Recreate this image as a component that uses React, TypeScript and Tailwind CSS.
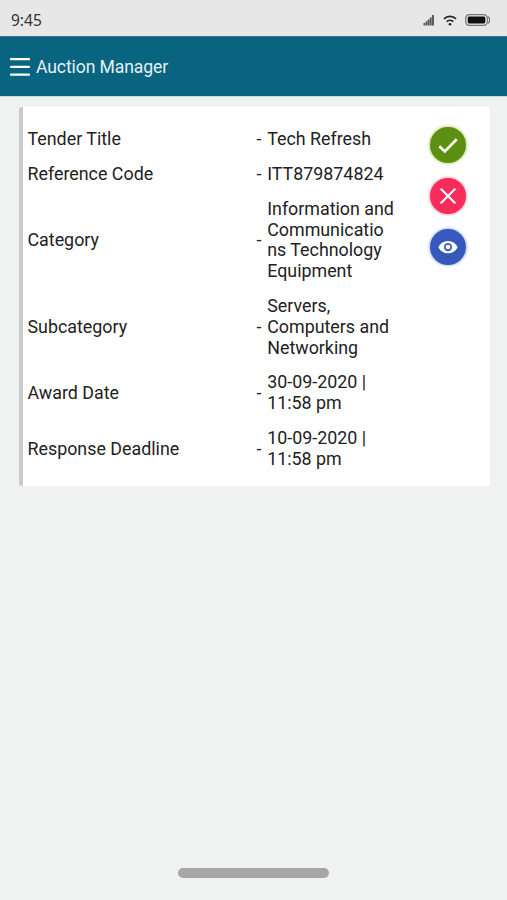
import type { ReactNode } from 'react';

interface TenderField {
    label: string;
    value: string;
}

const fields: TenderField[] = [
    { label: 'Tender Title', value: 'Tech Refresh' },
    { label: 'Reference Code', value: 'ITT879874824' },
    { label: 'Category', value: 'Information and\nCommunicatio\nns Technology\nEquipment' },
    { label: 'Subcategory', value: 'Servers,\nComputers and\nNetworking' },
    { label: 'Award Date', value: '30-09-2020 |\n11:58 pm' },
    { label: 'Response Deadline', value: '10-09-2020 |\n11:58 pm' },
];

function StatusBar() {
    return (
        <div className="flex h-9 items-center justify-between bg-[#e7e7e7] pt-1 pr-4 pl-[11px]">
            <span className="font-['Noto_Sans',sans-serif] text-[15.5px] leading-5 text-[#333]">9:45</span>
            <div className="flex items-center">
                {/* Signal */}
                <svg className="mr-[9px] h-[11px] w-[11px]" viewBox="0 0 11 11" fill="#5c5c5c">
                    <path d="M.5 8h1.8v2.5H.5zM2.6 6.3h1.8v4.2H2.6zM4.7 4.4h1.8v6.1H4.7zM6.8 2.4h1.8v8.1H6.8zM8.9 0H11v10.5H8.9z" />
                </svg>
                {/* Wifi */}
                <svg className="mr-2 h-[11px] w-[14px]" viewBox="0 0 14 11" fill="none" stroke="#222" strokeWidth="1.8">
                    <path d="M1 3.9a8.6 8.6 0 0 1 12 0M3.7 6.7a4.8 4.8 0 0 1 6.6 0" />
                    <circle cx="7" cy="9.3" r="1.3" fill="#222" stroke="none" />
                </svg>
                {/* Battery */}
                <svg className="h-[12px] w-[26px]" viewBox="0 0 26 12">
                    <rect x=".7" y=".7" width="21.6" height="10.6" rx="3.6" fill="none" stroke="#777" strokeWidth="1.2" />
                    <rect x="2.7" y="2.6" width="17.6" height="6.8" rx="1.4" fill="#111" />
                    <path d="M22.6 2.6c2.6.6 2.6 6.2 0 6.8" fill="none" stroke="#777" strokeWidth="1.2" />
                </svg>
            </div>
        </div>
    );
}

function Header() {
    return (
        <header className="flex h-[60px] items-center border-t border-[#3d7388] bg-[#096480] pl-[10px] text-white">
            <svg className="h-5 w-5" viewBox="0 0 20 20" stroke="currentColor" strokeWidth="2.2" strokeLinecap="round">
                <path d="M1 2.2h18M1 9.8h18M1 17.6h18" />
            </svg>
            <h1 className="ml-[6px] text-[17.6px] leading-6 tracking-[-0.12px] text-[#e4f0f4]">Auction Manager</h1>
        </header>
    );
}

function ActionButton({ label, className, children }: { label: string; className: string; children: ReactNode }) {
    return (
        <button aria-label={label} className={`flex h-9 w-9 items-center justify-center rounded-full ${className}`}>
            {children}
        </button>
    );
}

export default function App() {
    return (
        <div className="flex h-[900px] w-[507px] flex-col bg-[#eff2f1] font-[Roboto,sans-serif]">
            <StatusBar />
            <Header />
            <div className="h-px bg-[#c3dce6]" />

            <main className="flex-1 pt-[9.5px] pr-[17px] pl-[18.5px]">
                <section className="flex h-[379px] rounded-[3px] border-l-4 border-[#cbcbcb] bg-white pt-[15.4px] pl-[5px]">
                    <dl className="w-[371px] text-[17.85px] leading-[20.7px] text-[#222]">
                        {fields.map((field) => (
                            <div key={field.label} className="flex items-center py-[7.15px]">
                                <dt className="w-[229px]">{field.label}</dt>
                                <span className="w-[10.7px]">-</span>
                                <dd className="w-[131px] whitespace-pre">{field.value}</dd>
                            </div>
                        ))}
                    </dl>

                    <div className="ml-[31.5px] flex flex-col gap-[15px] pt-[5.1px]">
                        <ActionButton label="Accept" className="bg-[#5d8f12] shadow-[0_0_2px_1.5px_#cfe5a8]">
                            <svg className="h-5 w-5" viewBox="0 0 20 20" fill="none" stroke="#fff" strokeWidth="2.7">
                                <path d="M1.3 11.3 6.8 16.4 18.7 4.2" />
                            </svg>
                        </ActionButton>
                        <ActionButton label="Reject" className="bg-[#f72c5b] shadow-[0_0_2px_1.5px_#ffc4d0]">
                            <svg className="h-4 w-4" viewBox="0 0 16 16" fill="none" stroke="#fff" strokeWidth="2.1" strokeLinecap="round">
                                <path d="M1.3 1.3 14.7 14.7M14.7 1.3 1.3 14.7" />
                            </svg>
                        </ActionButton>
                        <ActionButton label="View" className="bg-[#3559bd] shadow-[0_0_2px_1.5px_#c5d3f8]">
                            <svg className="h-[14px] w-5" viewBox="0 0 20 14">
                                <path d="M.3 7.2C2.4 3.2 5.8 1 10 1s7.6 2.2 9.7 6.2c-2.1 4-5.5 6-9.7 6s-7.6-2-9.7-6z" fill="#fff" />
                                <circle cx="10" cy="7.1" r="3.3" fill="#fff" stroke="#3559bd" strokeWidth="1.7" />
                            </svg>
                        </ActionButton>
                    </div>
                </section>
            </main>

            <div className="mb-[22px] ml-[178px] h-[10px] w-[151px] rounded-full bg-[#a6a6a6]" />
        </div>
    );
}
